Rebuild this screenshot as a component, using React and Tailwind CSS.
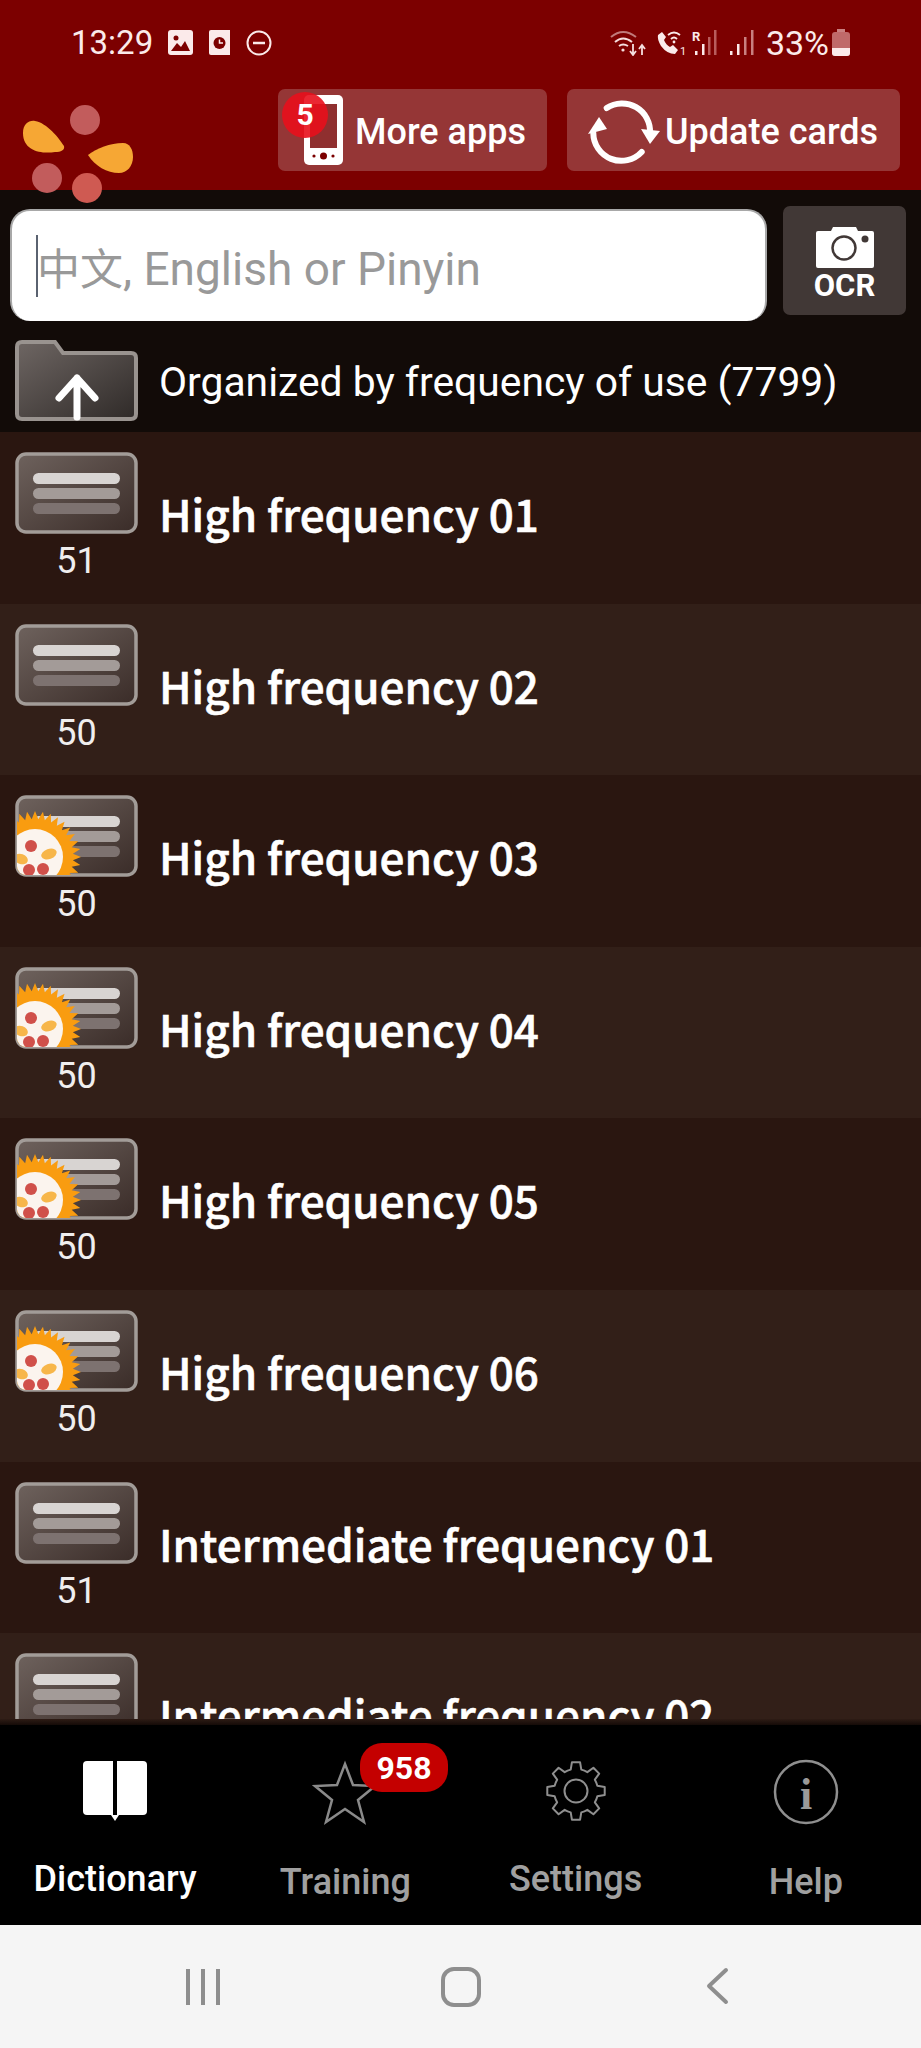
import React from 'react';

const rows = [
    { name: 'High frequency 01', count: 51 },
    { name: 'High frequency 02', count: 50 },
    { name: 'High frequency 03', count: 50, sun: true },
    { name: 'High frequency 04', count: 50, sun: true },
    { name: 'High frequency 05', count: 50, sun: true },
    { name: 'High frequency 06', count: 50, sun: true },
    { name: 'Intermediate frequency 01', count: 51 },
    { name: 'Intermediate frequency 02', count: 50 },
];

// spiky ring behind the little logo on started decks
const sunPoints = () => {
    const pts = [];
    for (let i = 0; i < 72; i++) {
        const r = i % 2 === 0 ? 46 : 38;
        const a = (i / 72) * Math.PI * 2;
        pts.push(`${20 + r * Math.cos(a)},${62 + r * Math.sin(a)}`);
    }
    return pts.join(' ');
};

const gearPath = () => {
    const cx = 32, cy = 32, teeth = 8;
    let d = '';
    for (let i = 0; i < teeth; i++) {
        const a = (i / teeth) * Math.PI * 2 - Math.PI / 2;
        const s = Math.PI / teeth;
        const p = (r, o) => `${(cx + r * Math.cos(a + o)).toFixed(2)} ${(cy + r * Math.sin(a + o)).toFixed(2)}`;
        d += `${i === 0 ? 'M' : 'L'}${p(22, -s * 0.62)} L${p(29, -s * 0.36)} L${p(29, s * 0.36)} L${p(22, s * 0.62)} `;
        d += `A22 22 0 0 1 ${p(22, s * 1.38)} `;
    }
    return d + 'Z';
};

const DeckIcon = ({ sun }) => (
    <svg viewBox="0 0 123 82" className="w-[123px] h-[82px] block">
        <defs>
            <linearGradient id="deckFill" x1="0" y1="0" x2="1" y2="1">
                <stop offset="0" stopColor="#6e625d" />
                <stop offset="1" stopColor="#3a2c28" />
            </linearGradient>
            <clipPath id="deckClip">
                <rect x="2" y="2" width="119" height="78" rx="9" />
            </clipPath>
        </defs>
        <rect x="2" y="2" width="119" height="78" rx="9" fill="url(#deckFill)" stroke="#a29c98" strokeWidth="3.5" />
        <rect x="18" y="21" width="87" height="11" rx="5.5" fill="#d8d4d2" />
        <rect x="18" y="36" width="87" height="11" rx="5.5" fill="#a39b98" />
        <rect x="18" y="51" width="87" height="11" rx="5.5" fill="#7d7270" />
        {sun && (
            <g clipPath="url(#deckClip)">
                <polygon points={sunPoints()} fill="#f99c10" />
                <circle cx="20" cy="62" r="28" fill="#fbf4ee" />
                <circle cx="16" cy="51" r="6" fill="#d0504a" />
                <circle cx="28" cy="74" r="6" fill="#d0504a" />
                <circle cx="14" cy="75" r="6" fill="#d0504a" />
                <ellipse cx="34" cy="59" rx="8" ry="5" transform="rotate(-20 34 59)" fill="#f7b64a" />
                <ellipse cx="6" cy="64" rx="7" ry="5" transform="rotate(20 6 64)" fill="#f7b64a" />
            </g>
        )}
    </svg>
);

const FolderUpIcon = () => (
    <svg viewBox="0 0 123 81" className="w-[123px] h-[81px] block">
        <defs>
            <linearGradient id="folderFill" x1="0" y1="0" x2="1" y2="1">
                <stop offset="0" stopColor="#6e6663" />
                <stop offset="1" stopColor="#2f2a28" />
            </linearGradient>
        </defs>
        <path
            d="M7 2 H40 L48 13 H116 Q121 13 121 18 V74 Q121 79 116 79 H7 Q2 79 2 74 V7 Q2 2 7 2 Z"
            fill="url(#folderFill)"
            stroke="#99938f"
            strokeWidth="4"
        />
        <path d="M62 77 V38 M44 58 L62 38 L80 58" fill="none" stroke="#fff" strokeWidth="7" strokeLinecap="round" strokeLinejoin="round" />
    </svg>
);

const Logo = () => (
    <svg viewBox="0 0 125 110" className="absolute left-[15px] top-[100px] w-[125px] h-[110px] z-10">
        <circle cx="70" cy="20" r="15" fill="#c25c5c" />
        <circle cx="32" cy="78" r="15" fill="#c25c5c" />
        <circle cx="72" cy="88" r="15" fill="#cf5a52" />
        <path d="M8 33 C8 24 14 20 20 21 C32 23 44 38 49 46 C50 50 46 52 40 52 C28 54 8 52 8 33 Z" fill="#f6a734" />
        <path d="M73 55 C82 48 95 43 108 43 C115 43 118 50 118 57 C118 66 112 73 104 73 C92 73 80 66 73 55 Z" fill="#f6a734" />
    </svg>
);

const PhoneIcon = () => (
    <svg viewBox="0 0 39 70" className="w-[39px] h-[70px] shrink-0">
        <rect x="0" y="0" width="39" height="70" rx="5" fill="#fff" />
        <rect x="6" y="9" width="27" height="44" fill="#8f2f2f" />
        <circle cx="19.5" cy="61" r="3.5" fill="#7c0000" />
        <circle cx="10" cy="61" r="1.6" fill="#7c0000" />
        <circle cx="29" cy="61" r="1.6" fill="#7c0000" />
    </svg>
);

const SyncIcon = () => (
    <svg viewBox="126 96 76 68" className="w-[76px] h-[68px] shrink-0">
        <path d="M146.7 108 A28 28 0 0 1 190 133" fill="none" stroke="#fff" strokeWidth="6" strokeLinecap="round" />
        <path d="M181.7 152 A28 28 0 0 1 133.3 133" fill="none" stroke="#fff" strokeWidth="6" strokeLinecap="round" />
        <polygon points="181,129 200,131 190,144" fill="#fff" />
        <polygon points="128,134 147,129 139,117" fill="#fff" />
    </svg>
);

const StatusLeft = () => (
    <div className="flex items-center">
        <span className="text-[33px] leading-none text-[#fbeaea] font-['Roboto',sans-serif] w-[97px]">13:29</span>
        <svg viewBox="0 0 25 25" className="w-[25px] h-[25px]">
            <rect width="25" height="25" rx="3" fill="#fbeaea" />
            <circle cx="8" cy="8" r="2.5" fill="#7c0000" />
            <path d="M3 21 L9 13 L13 17 L17 11 L22 21 Z" fill="#7c0000" />
        </svg>
        <svg viewBox="0 0 21 25" className="w-[21px] h-[25px] ml-[16px]">
            <path d="M2 0 H21 V25 H2 Q0 25 0 23 V2 Q0 0 2 0 Z" fill="#fbeaea" />
            <circle cx="10.5" cy="13" r="6" fill="#7c0000" />
            <path d="M10.5 9.5 V13 H14" fill="none" stroke="#fbeaea" strokeWidth="1.5" />
        </svg>
        <svg viewBox="0 0 26 26" className="w-[26px] h-[26px] ml-[16px]">
            <circle cx="13" cy="13" r="11.5" fill="none" stroke="#fbeaea" strokeWidth="2" />
            <path d="M7 13 H19" stroke="#fbeaea" strokeWidth="2.5" />
        </svg>
    </div>
);

const StatusRight = () => (
    <div className="flex items-center">
        <svg viewBox="0 0 38 27" className="w-[38px] h-[27px]">
            <path d="M2 8 Q14 -2 27 8" fill="none" stroke="#c07a7a" strokeWidth="2" />
            <path d="M6 13 Q14 6 23 13" fill="none" stroke="#f5dede" strokeWidth="2" />
            <path d="M10 17 Q14 14 19 17" fill="none" stroke="#f5dede" strokeWidth="2" />
            <circle cx="14" cy="21" r="1.6" fill="#f5dede" />
            <path d="M24 15 V25 M21 22 L24 26 L27 22" fill="none" stroke="#f5dede" strokeWidth="1.8" />
            <path d="M33 26 V17 M30 20 L33 16 L36 20" fill="none" stroke="#f5dede" strokeWidth="1.8" />
        </svg>
        <svg viewBox="0 0 30 27" className="w-[30px] h-[27px] ml-[9px]">
            <path d="M6 3 L10 8 L8 11 Q10 16 14 18 L17 16 L22 21 L19 25 Q11 25 5 17 Q1 10 2 6 Z" fill="#fbeaea" />
            <path d="M12 6 Q18 1 24 6 M15 10 Q18 7 21 10" fill="none" stroke="#fbeaea" strokeWidth="1.8" />
            <circle cx="18" cy="13" r="1.4" fill="#fbeaea" />
            <text x="24" y="26" fontSize="11" fill="#fbeaea" fontFamily="Roboto, sans-serif">1</text>
        </svg>
        <svg viewBox="0 0 26 27" className="w-[26px] h-[27px] ml-[6px]">
            <text x="0" y="12" fontSize="13" fontWeight="700" fill="#fbeaea" fontFamily="Roboto, sans-serif">R</text>
            <rect x="3" y="22" width="2.5" height="4" fill="#fbeaea" />
            <rect x="10" y="15" width="2.5" height="11" fill="#fbeaea" />
            <rect x="16" y="8" width="2.5" height="18" fill="#b85c5c" />
            <rect x="22" y="1" width="2.5" height="25" fill="#b85c5c" />
        </svg>
        <svg viewBox="0 0 24 27" className="w-[24px] h-[27px] ml-[12px]">
            <rect x="0" y="22" width="2.5" height="4" fill="#fbeaea" />
            <rect x="7" y="15" width="2.5" height="11" fill="#fbeaea" />
            <rect x="14" y="8" width="2.5" height="18" fill="#c98080" />
            <rect x="21" y="1" width="2.5" height="25" fill="#c98080" />
        </svg>
        <span className="text-[34px] leading-none text-[#fbeaea] font-['Roboto',sans-serif] ml-[12px]">33%</span>
        <svg viewBox="0 0 18 27" className="w-[18px] h-[27px] ml-[3px]">
            <rect x="5" y="0" width="8" height="3" fill="#c98080" />
            <rect x="0" y="3" width="18" height="24" rx="3" fill="#c06a6a" />
            <path d="M0 19 H18 V24 Q18 27 15 27 H3 Q0 27 0 24 Z" fill="#fbeaea" />
        </svg>
    </div>
);

const NavItem = ({ label, active, labelClass, children }) => (
    <div className="flex flex-col items-center">
        <div className="h-[66px] flex items-center justify-center">{children}</div>
        <span className={`text-[36px] leading-[42px] font-medium font-['Roboto',sans-serif] ${active ? 'text-white' : 'text-[#a0a0a0]'} ${labelClass}`}>
            {label}
        </span>
    </div>
);

export default function App() {
    return (
        <div className="relative w-[921px] h-[2048px] flex flex-col overflow-hidden bg-[#120b08] font-['Roboto',sans-serif]">
            <header className="h-[190px] shrink-0 bg-[#7c0000]">
                <div className="h-[89px] pl-[71px] pr-[71px] pb-[4px] flex items-center justify-between">
                    <StatusLeft />
                    <StatusRight />
                </div>
                <div className="flex justify-end gap-[20px] pr-[21px]">
                    <button className="relative w-[269px] h-[82px] rounded-[7px] bg-[#953636] flex items-center pl-[26px] gap-[12px]">
                        <PhoneIcon />
                        <span className="text-[36px] mt-[3px] font-medium leading-none text-white">More apps</span>
                        <span className="absolute left-[4px] top-[3px] w-[46px] h-[46px] rounded-full bg-[#e8101ce6] flex items-center justify-center text-[30px] font-bold leading-none text-white">5</span>
                    </button>
                    <button className="w-[333px] h-[82px] rounded-[7px] bg-[#953636] flex items-center pl-[19px] gap-[3px]">
                        <SyncIcon />
                        <span className="text-[36px] mt-[3px] font-medium leading-none text-white">Update cards</span>
                    </button>
                </div>
            </header>
            <Logo />

            <div className="h-[150px] shrink-0 flex pl-[10px] pr-[15px] pt-[16px] gap-[16px]">
                <div className="relative w-[757px] h-[112px] mt-[3px] rounded-[20px] bg-white border-t-2 border-x-2 border-[#a8a8a8] border-b-0 flex items-center pl-[25px]">
                    <span className="absolute left-[24px] top-[24px] w-[2px] h-[62px] bg-[#5a6270]" />
                    <span className="text-[46px] mt-[5px] leading-none text-[#999999] font-['Roboto','Noto_Sans_CJK_SC',sans-serif]">
                        <span className="text-[43px]">中文</span>, English or Pinyin
                    </span>
                </div>
                <button className="w-[123px] h-[109px] rounded-[7px] bg-[#413836] flex flex-col items-center pt-[21px]">
                    <svg viewBox="0 0 58 41" className="w-[58px] h-[41px] block">
                        <path d="M2 4 H15 L17 0 H40 L42 4 H56 Q58 4 58 6 V39 Q58 41 56 41 H2 Q0 41 0 39 V6 Q0 4 2 4 Z" fill="#fff" />
                        <circle cx="28" cy="21" r="11.5" fill="none" stroke="#413836" strokeWidth="2.5" />
                        <circle cx="49" cy="12" r="3.5" fill="#413836" />
                    </svg>
                    <span className="text-[31px] font-bold leading-none text-white mt-[2px]">OCR</span>
                </button>
            </div>

            <div className="h-[92px] shrink-0 flex items-start pl-[15px]">
                <FolderUpIcon />
                <span className="ml-[21px] mt-[22px] text-[40.8px] leading-none text-white">Organized by frequency of use (7799)</span>
            </div>

            <div className="flex-1 min-h-0 overflow-hidden">
                {rows.map((row, i) => (
                    <div key={row.name} className={`h-[171.6px] flex pl-[15px] pt-[20px] ${i % 2 === 0 ? 'bg-[#2a1610]' : 'bg-[#321f18]'}`}>
                        <div className="w-[123px] shrink-0 flex flex-col items-center">
                            <DeckIcon sun={row.sun} />
                            <span className="mt-[9px] text-[36px] leading-none text-[#f0eeee]">{row.count}</span>
                        </div>
                        <span className="ml-[21px] mt-[31px] text-[44px] leading-[60px] font-medium text-white [-webkit-text-stroke:0.6px_white] font-['Noto_Sans_CJK_SC',sans-serif]">{row.name}</span>
                    </div>
                ))}
            </div>

            <div className="h-[6px] shrink-0 bg-gradient-to-b from-[#2e1c15] to-[#150b08]" />
            <nav className="relative h-[200px] shrink-0 bg-black grid grid-cols-4 pt-[33px]">
                <NavItem label="Dictionary" active labelClass="mt-[34px]">
                    <svg viewBox="0 0 64 60" className="w-[64px] h-[60px]">
                        <path d="M4 0 H30 V54 H4 Q0 54 0 50 V4 Q0 0 4 0 Z" fill="#fff" />
                        <path d="M34 0 H60 Q64 0 64 4 V50 Q64 54 60 54 H34 Z" fill="#fff" />
                        <path d="M28 54 H36 L32 60 Z" fill="#fff" />
                    </svg>
                </NavItem>
                <NavItem label="Training" labelClass="mt-[37px]">
                    <svg viewBox="0 0 66 66" className="w-[66px] h-[66px] mt-[4px]">
                        <polygon points="33,4 41,25 63,26 46,40 52,62 33,49 14,62 20,40 3,26 25,25" fill="none" stroke="#8a8a8a" strokeWidth="2.5" />
                    </svg>
                </NavItem>
                <NavItem label="Settings" labelClass="mt-[34px]">
                    <svg viewBox="0 0 64 64" className="w-[64px] h-[64px]">
                        <path d={gearPath()} fill="none" stroke="#8f8f8f" strokeWidth="2" strokeLinejoin="round" />
                        <circle cx="32" cy="32" r="11.5" fill="none" stroke="#8f8f8f" strokeWidth="2" />
                    </svg>
                </NavItem>
                <NavItem label="Help" labelClass="mt-[37px]">
                    <svg viewBox="0 0 66 66" className="w-[66px] h-[66px] mt-[2px]">
                        <circle cx="33" cy="33" r="31" fill="none" stroke="#8f8f8f" strokeWidth="2.5" />
                        <text x="33" y="50" textAnchor="middle" fontSize="44" fontWeight="700" fill="#9a9a9a" fontFamily="Liberation Serif, serif">i</text>
                    </svg>
                </NavItem>
                <span className="absolute left-[360px] top-[18px] w-[88px] h-[49px] rounded-[22px] bg-[#c40000] flex items-center justify-center text-[32px] font-bold leading-none text-white">958</span>
            </nav>

            <div className="h-[123px] shrink-0 bg-[#f5f5f5] flex items-center justify-center relative">
                <div className="grid grid-cols-3 w-[693px]">
                    <svg viewBox="0 0 36 40" className="w-[36px] h-[40px] justify-self-center ml-[-54px]">
                        <path d="M3 2 V38 M18 2 V38 M33 2 V38" stroke="#8e8e8e" strokeWidth="4" fill="none" />
                    </svg>
                    <svg viewBox="0 0 40 40" className="w-[40px] h-[40px] justify-self-center">
                        <rect x="2" y="2" width="36" height="36" rx="11" fill="none" stroke="#8e8e8e" strokeWidth="4" />
                    </svg>
                    <svg viewBox="0 0 24 38" className="w-[24px] h-[38px] justify-self-center ml-[50px]">
                        <path d="M21 3 L4 19 L21 35" stroke="#8e8e8e" strokeWidth="4" strokeLinecap="round" strokeLinejoin="round" fill="none" />
                    </svg>
                </div>
            </div>
        </div>
    );
}
